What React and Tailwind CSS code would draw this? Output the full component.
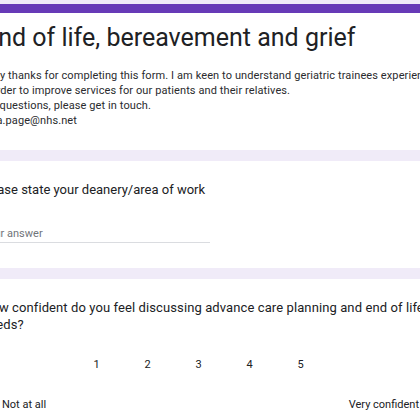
const scale = [1, 2, 3, 4, 5];

const Card = ({ children, className = '' }) => (
    <div className={`bg-white rounded-lg ${className}`}>{children}</div>
);

export default function App() {
    return (
        <div className="w-[420px] h-[420px] overflow-hidden bg-[#f0ebf8] text-[#202124] font-['Roboto','Liberation_Sans',sans-serif]">
            <div className="-ml-[18px] w-[760px] pt-[4px] flex flex-col gap-[11px]">
                <Card className="border-t-[9px] border-[#673ab7] pt-[9px] pb-[22px]">
                    <h1 className="ml-[2px] text-[25px] leading-[32px] whitespace-nowrap">
                        End of life, bereavement and grief
                    </h1>
                    <p className="mt-[14px] -ml-[4px] text-[11px] leading-[15px] tracking-[0.1px] whitespace-nowrap text-[#2a2b2e]">
                        Many thanks for completing this form. I am keen to understand geriatric trainees experiences of end of life care
                        <br />
                        In order to improve services for our patients and their relatives.
                        <br />
                        Any questions, please get in touch.
                        <br />
                        anna.page@nhs.net
                    </p>
                </Card>

                <Card className="pt-[20px] pb-[25px]">
                    <p className="-ml-[3px] text-[13px] leading-[17px] whitespace-nowrap">
                        Please state your deanery/area of work
                    </p>
                    <div className="mt-[28px] w-[228px] border-b border-[#dadce0] pb-[1px] text-[11px] leading-[15px] text-[#70757a]">
                        Your answer
                    </div>
                </Card>

                <Card className="pt-[20px] pb-[40px]">
                    <p className="text-[13px] leading-[17px] tracking-[0.1px] whitespace-nowrap">
                        How confident do you feel discussing advance care planning and end of life care with patients
                        <br />
                        needs?
                    </p>
                    <div className="mt-[24px] ml-[89px] flex text-[11px] leading-[15px]">
                        {scale.map((n) => (
                            <span key={n} className="w-[51px] text-center">{n}</span>
                        ))}
                    </div>
                    <div className="mt-[25px] ml-[20px] w-[417px] flex justify-between text-[11px] leading-[15px]">
                        <span>Not at all</span>
                        <span>Very confident</span>
                    </div>
                </Card>
            </div>
        </div>
    );
}
